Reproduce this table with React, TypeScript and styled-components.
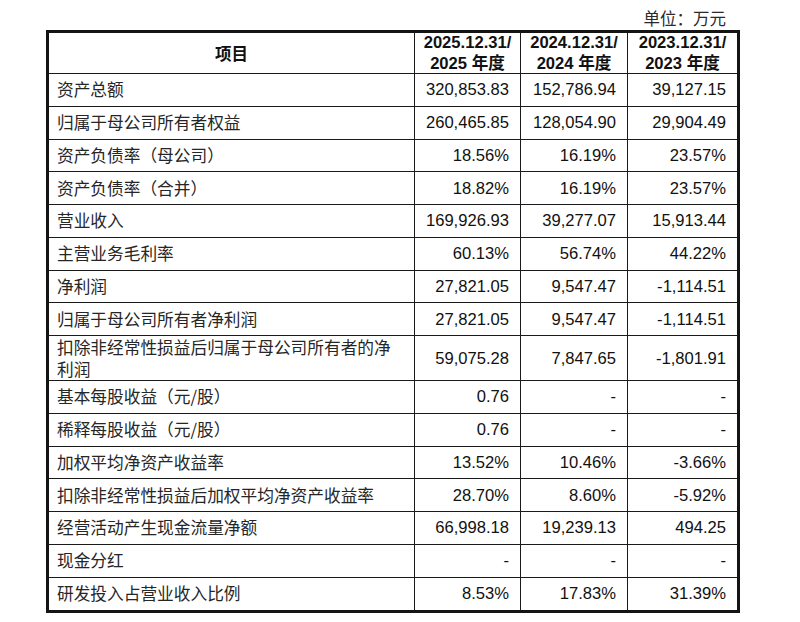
import styled, { createGlobalStyle } from "styled-components";

const GlobalStyle = createGlobalStyle`
  html, body {
    margin: 0;
    padding: 0;
    background: #ffffff;
  }
  * {
    box-sizing: border-box;
  }
`;

const cjk = `"Noto Sans CJK SC", "Noto Sans", sans-serif`;
const latin = `"Liberation Sans", Arial, "Noto Sans CJK SC", sans-serif`;

const Page = styled.div`
  width: 800px;
  height: 622px;
  padding: 7px 0 0 46px;
  background: #fff;
`;

const Unit = styled.div`
  width: 680px;
  height: 23px;
  line-height: 22px;
  text-align: right;
  font-family: ${cjk};
  font-size: 16.5px;
  color: #2a2a2a;
`;

const Table = styled.div`
  width: 694px;
  display: grid;
  grid-template-columns: 366px 106px 107px 109px;
  border: 3px solid #141414;
`;

interface CellProps {
  $num?: boolean;
  $head?: boolean;
  $tall?: boolean;
  $lastCol?: boolean;
  $lastRow?: boolean;
}

const Cell = styled.div<CellProps>`
  height: ${(p) => (p.$head ? "41px" : p.$tall ? "45px" : "32.75px")};
  display: flex;
  align-items: center;
  justify-content: ${(p) => (p.$head ? "center" : p.$num ? "flex-end" : "flex-start")};
  text-align: ${(p) => (p.$head ? "center" : "left")};
  padding: ${(p) => (p.$num ? "0 11px 0 0" : p.$head ? "0" : "0 0 0 8px")};
  border-right: ${(p) => (p.$lastCol ? "none" : "1.6px solid #1a1a1a")};
  border-bottom: ${(p) => (p.$lastRow ? "none" : "1.6px solid #1a1a1a")};
  font-family: ${(p) => (p.$num || p.$head ? latin : cjk)};
  font-size: ${(p) => (p.$num || p.$head ? "16.6px" : "16.7px")};
  font-weight: ${(p) => (p.$head ? 700 : 400)};
  line-height: ${(p) => (p.$head ? "21px" : "19px")};
  color: ${(p) => (p.$num || p.$head ? "#111" : "#262626")};
  white-space: nowrap;
`;

const HeadTitle = styled.span`
  font-family: ${cjk};
  font-weight: 700;
  font-size: 16.5px;
`;

const TwoLine = styled.span`
  line-height: 22px;
`;

type Row = { label: React.ReactNode; values: string[]; tall?: boolean };

const rows: Row[] = [
  { label: "资产总额", values: ["320,853.83", "152,786.94", "39,127.15"] },
  { label: "归属于母公司所有者权益", values: ["260,465.85", "128,054.90", "29,904.49"] },
  { label: "资产负债率（母公司）", values: ["18.56%", "16.19%", "23.57%"] },
  { label: "资产负债率（合并）", values: ["18.82%", "16.19%", "23.57%"] },
  { label: "营业收入", values: ["169,926.93", "39,277.07", "15,913.44"] },
  { label: "主营业务毛利率", values: ["60.13%", "56.74%", "44.22%"] },
  { label: "净利润", values: ["27,821.05", "9,547.47", "-1,114.51"] },
  { label: "归属于母公司所有者净利润", values: ["27,821.05", "9,547.47", "-1,114.51"] },
  {
    label: (
      <TwoLine>
        扣除非经常性损益后归属于母公司所有者的净
        <br />
        利润
      </TwoLine>
    ),
    values: ["59,075.28", "7,847.65", "-1,801.91"],
    tall: true,
  },
  { label: "基本每股收益（元/股）", values: ["0.76", "-", "-"] },
  { label: "稀释每股收益（元/股）", values: ["0.76", "-", "-"] },
  { label: "加权平均净资产收益率", values: ["13.52%", "10.46%", "-3.66%"] },
  { label: "扣除非经常性损益后加权平均净资产收益率", values: ["28.70%", "8.60%", "-5.92%"] },
  { label: "经营活动产生现金流量净额", values: ["66,998.18", "19,239.13", "494.25"] },
  { label: "现金分红", values: ["-", "-", "-"] },
  { label: "研发投入占营业收入比例", values: ["8.53%", "17.83%", "31.39%"] },
];

const years = ["2025", "2024", "2023"];

export default function App() {
  return (
    <>
      <GlobalStyle />
      <Page>
        <Unit>单位：万元</Unit>
        <Table>
          <Cell $head>
            <HeadTitle>项目</HeadTitle>
          </Cell>
          {years.map((y, i) => (
            <Cell $head key={y} $lastCol={i === years.length - 1}>
              <div>
                {y}.12.31/
                <br />
                {y} 年度
              </div>
            </Cell>
          ))}
          {rows.map((r, ri) => {
            const last = ri === rows.length - 1;
            return [
              <Cell key={`l${ri}`} $tall={r.tall} $lastRow={last}>
                {r.label}
              </Cell>,
              ...r.values.map((v, vi) => (
                <Cell
                  key={`v${ri}-${vi}`}
                  $num
                  $tall={r.tall}
                  $lastRow={last}
                  $lastCol={vi === r.values.length - 1}
                >
                  {v}
                </Cell>
              )),
            ];
          })}
        </Table>
      </Page>
    </>
  );
}
